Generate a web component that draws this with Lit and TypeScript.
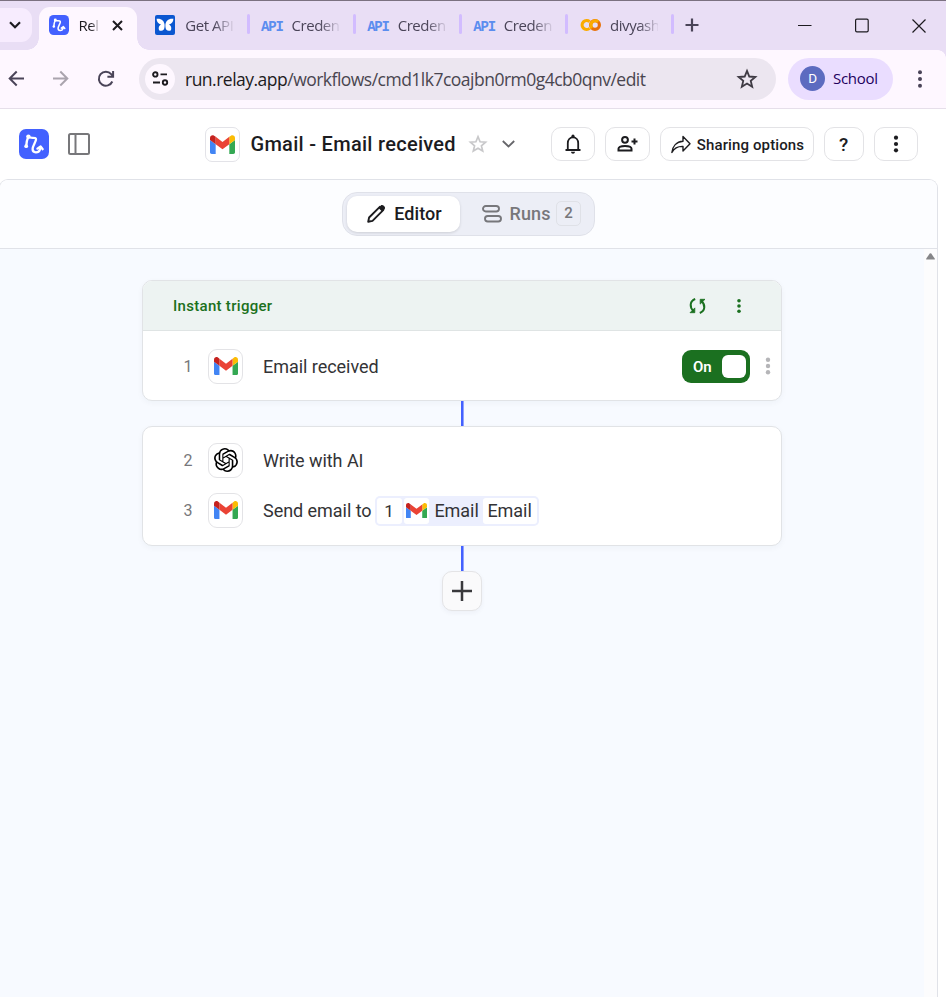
import { LitElement, html, css, svg } from "lit";
import { customElement } from "lit/decorators.js";

const shared = css`
  * { box-sizing: border-box; }
  svg { display: block; flex: none; }
`;

const gmail = (w: number) => html`<svg width=${w} height=${w * 0.76} viewBox="0 0 88 66">
  <path fill="#4285f4" d="M6 66h14V32L0 17v43c0 3.3 2.7 6 6 6z"/>
  <path fill="#34a853" d="M68 66h14c3.3 0 6-2.7 6-6V17L68 32z"/>
  <path fill="#fbbc04" d="M68 6v26l20-15V9c0-7.400-8.500-11.600-14.400-7.200z"/>
  <path fill="#ea4335" d="M20 32V6l24 18L68 6v26L44 50z"/>
  <path fill="#c5221f" d="M0 9v8l20 15V6l-5.600-4.200C8.500-2.600 0 1.600 0 9z"/>
</svg>`;

const relay = (s: number) => html`<svg width=${s} height=${s} viewBox="0 0 30 30">
  <rect width="30" height="30" rx="7" fill="#4361ff"/>
  <g fill="none" stroke="#fff" stroke-width="2.300" stroke-linecap="round" stroke-linejoin="round">
    <path d="M7.200 17.200C7.400 13 8.300 10 9.300 7.800C11.500 10 17.500 7.300 17 10.600C16.500 13.500 13.600 17 13.600 20C13.600 24.400 19.600 24.200 20.800 20.800C21.200 19.800 21.400 19 21.500 18M18.400 19.600L21.600 17.400L23.700 20.200"/>
  </g>
  <circle cx="9.400" cy="7.600" r="2.200" fill="#fff"/><circle cx="7.200" cy="17.200" r="1.900" fill="#fff"/>
</svg>`;

const dots = (r: number, gap: number, color: string) => html`<svg width="6" height="24" viewBox="0 0 6 24" fill=${color}>
  ${[-1, 0, 1].map((i) => svg`<circle cx="3" cy=${12 + i * gap} r=${r}/>`)}
</svg>`;

const star = (s: number, color: string, w: number) => html`<svg width=${s} height=${s} viewBox="0 0 24 24" fill="none" stroke=${color} stroke-width=${w}>
  <path d="M12 3.200l2.500 6.100 6.600.5-5 4.300 1.550 6.400L12 17l-5.650 3.500 1.550-6.400-5-4.300 6.600-.5z"/>
</svg>`;

const butterfly = html`<svg width="20" height="20" viewBox="0 0 20 20">
  <rect width="20" height="20" rx="2" fill="#0b57d0"/>
  <path fill="#fff" d="M9.600 9.700C9.200 6 6.500 3.200 1.600 3.800C1.700 7 3.300 8.800 6 9.600C4 10.500 3.200 12.500 4 15.200C7 17 9.600 15 9.600 11.200zM10.400 9.700C10.800 6 13.500 3.200 18.400 3.800C18.300 7 16.700 8.800 14 9.600C16 10.500 16.800 12.500 16 15.200C13 17 10.400 15 10.400 11.200z"/>
</svg>`;

const colab = html`<svg width="22" height="14" viewBox="0 0 22 14" fill="none" stroke-width="3.200">
  <path stroke="#fbab00" d="M9.600 3.600A4.500 4.500 0 1 0 9.600 10.400"/>
  <circle cx="15" cy="7" r="4.400" stroke="#e8710a"/>
  <path stroke="#fbab00" d="M11.900 10.100A4.400 4.400 0 0 1 18.100 3.900"/>
</svg>`;

const api = html`<span class="api">API</span>`;

@customElement("browser-tabs")
export class BrowserTabs extends LitElement {
  static styles = [shared, css`
    :host { display: flex; height: 50px; background: #e9def5; border-top: 1px solid #7b7180;
      font-family: "Open Sans", "Noto Sans", sans-serif; font-size: 15px; color: #4a4458; }
    .search { width: 32px; height: 34px; margin-top: 7px; background: #f7ecfe; border-radius: 0 11px 11px 0;
      display: flex; align-items: center; padding-left: 9px; }
    .active { position: relative; width: 98px; margin: 6px 5px 0 7px; background: #fef7ff; border-radius: 11px 11px 0 0;
      display: flex; align-items: center; padding: 0 0 7px 10px; color: #1d1b20; }
    .active::before, .active::after { content: ""; position: absolute; bottom: 0; width: 12px; height: 12px; }
    .active::before { left: -12px; background: radial-gradient(circle at 0 0, transparent 11.5px, #fef7ff 12px); }
    .active::after { right: -12px; background: radial-gradient(circle at 100% 0, transparent 11.500px, #fef7ff 12px); }
    .name { overflow: hidden; white-space: nowrap; margin-left: 9.500px; width: 48px; letter-spacing: -.45px; line-height: 24px;
      -webkit-mask-image: linear-gradient(90deg, #000 60%, transparent 105%); mask-image: linear-gradient(90deg, #000 60%, transparent 105%); }
    .active .name { width: 20px; }
    .close { margin-left: 13.500px; }
    .tab { width: 106.200px; height: 48px; display: flex; align-items: center; padding-left: 12.800px; position: relative; }
    .tab::after { content: ""; position: absolute; right: -1.500px; top: 13px; width: 3px; height: 20px; border-radius: 2px; background: #d2bcff; }
    .api { width: 21px; font: 700 14px "Liberation Mono", monospace; letter-spacing: -1.200px; color: #5b8def; }
    .icon { width: 21px; flex: none; }
    .new { margin: 17px 0 0 12px; }
    .window { margin: 17px 20px 0 auto; display: flex; gap: 43px; }
  `];
  render() {
    const tabs = [
      [butterfly, "Get API key"], [api, "Credentials"], [api, "Credentials"], [api, "Credentials"], [colab, "divyashree"],
    ];
    return html`
      <div class="search"><svg width="12" height="8" viewBox="0 0 12 8" fill="none" stroke="#1d1b20" stroke-width="2.200"><path d="M1 1.200l5 5 5-5"/></svg></div>
      <div class="active">${relay(20)}<span class="name">Relay</span>
        <svg class="close" width="11" height="11" viewBox="0 0 11 11" stroke="#1d1b20" stroke-width="2"><path d="M1 1l9 9M10 1l-9 9"/></svg></div>
      ${tabs.map(([icon, name]) => html`<div class="tab"><span class="icon">${icon}</span><span class="name">${name}</span></div>`)}
      <svg class="new" width="14" height="14" viewBox="0 0 14 14" stroke="#4a4458" stroke-width="2.200"><path d="M7 .5v13M.5 7h13"/></svg>
      <div class="window">
        <svg width="14" height="15" viewBox="0 0 14 15" stroke="#1d1b20"><path d="M0 7.500h13.500"/></svg>
        <svg width="14" height="15" viewBox="0 0 14 15" fill="none" stroke="#1d1b20" stroke-width="1.200"><rect x=".6" y="1.200" width="12.600" height="12.600" rx="1.300"/></svg>
        <svg width="14" height="15" viewBox="0 0 14 15" stroke="#1d1b20" stroke-width="1.200"><path d="M.5 1.500l13 13M13.500 1.500l-13 13"/></svg>
      </div>`;
  }
}

@customElement("browser-toolbar")
export class BrowserToolbar extends LitElement {
  static styles = [shared, css`
    :host { display: flex; align-items: center; height: 59px; background: #fef7ff; border-bottom: 1px solid #e6dfea;
      padding: 0 0 1px 8px; font-family: "Open Sans", "Noto Sans", sans-serif; color: #4a4458; position: relative; }
    .corner { position: absolute; right: 0; top: 0; width: 8px; height: 8px; background: radial-gradient(circle at 0 100%, transparent 7.500px, #e9def5 8px); }
    .nav { display: flex; gap: 27px; align-items: center; }
    .omni { margin-left: 23px; width: 637px; height: 42px; border-radius: 21px; background: #ece6f0; display: flex; align-items: center; padding: 0 18px 0 6px; }
    .site { width: 30px; height: 30px; border-radius: 50%; background: #fef7ff; display: flex; align-items: center; justify-content: center; margin-right: 10px; }
    .url { font-size: 17.500px; letter-spacing: -.51px; color: #49454f; white-space: nowrap; flex: 1; }
    .host { color: #1d1b20; }
    .profile { margin-left: 12px; width: 105px; height: 42px; border-radius: 21px; background: #eaddff; display: flex; align-items: center; padding: 0 0 1px 12px;
      font-size: 15px; letter-spacing: -.3px; color: #21005d; }
    .avatar { width: 25px; height: 25px; border-radius: 50%; background: #5c6bc0; color: #fff; font: 13.500px Roboto, sans-serif; text-align: center; line-height: 25px; margin-right: 8px; }
    .more { margin-left: 24px; }
  `];
  render() {
    return html`
      <div class="corner"></div>
      <div class="nav">
        <svg width="17" height="17" viewBox="0 0 17 17" fill="none" stroke="#4a4458" stroke-width="2"><path d="M16 8.500H2M8.700 1.500l-7 7 7 7"/></svg>
        <svg width="17" height="17" viewBox="0 0 17 17" fill="none" stroke="#aaa4ae" stroke-width="2"><path d="M1 8.500h14M8.300 1.500l7 7-7 7"/></svg>
        <svg width="20" height="18" viewBox="0 0 20 18" fill="none" stroke="#4a4458" stroke-width="2"><path d="M16.300 11.500A7 7 0 1 1 15.200 4.200L17 6.200M17.100 1v5.800h-5.700"/></svg>
      </div>
      <div class="omni">
        <div class="site"><svg width="17" height="15" viewBox="0 0 17 15" fill="none" stroke="#1d1b20" stroke-width="1.900"><circle cx="3.300" cy="3.400" r="2.200"/><path d="M8.500 3.400H15M1 11.500h7"/><circle cx="13" cy="11.500" r="2.200"/></svg></div>
        <span class="url"><span class="host">run.relay.app</span>/workflows/cmd1lk7coajbn0rm0g4cb0qnv/edit</span>
        ${star(22, "#3f3b44", 2)}
      </div>
      <div class="profile"><span class="avatar">D</span>School</div>
      <span class="more">${dots(2, 6.7, "#4a4458")}</span>`;
  }
}

@customElement("workflow-header")
export class WorkflowHeader extends LitElement {
  static styles = [shared, css`
    :host { display: flex; align-items: center; height: 70px; padding-left: 19px; background: #fff; color: #1c1c1f; font-family: Roboto, sans-serif; }
    .side { margin-left: 19px; }
    .app { margin-left: 115px; width: 35px; height: 35px; border: 1px solid #e3e3e8; border-radius: 7px; display: flex; align-items: center; justify-content: center; }
    h1 { width: 206px; margin: 0 0 0 10.500px; font-size: 20px; font-weight: 480; letter-spacing: .29px; white-space: nowrap; }
    .fav { margin-left: 11.500px; }
    .chev { margin: 0 36px 0 13.500px; }
    .btn { height: 34px; border: 1px solid #e3e3e6; border-radius: 10px; display: flex; align-items: center; justify-content: center; margin-right: 10px; width: 44px;
      font-size: 15px; font-weight: 500; white-space: nowrap; }
    .share { width: 154px; gap: 6px; letter-spacing: .12px; padding: 1px 0 0 2px; }
    .help { width: 40px; font-size: 19px; }
    .wide { width: 45px; }
  `];
  render() {
    return html`
      ${relay(30)}
      <svg class="side" width="22" height="22" viewBox="0 0 22 22" fill="none" stroke="#77777a" stroke-width="2"><rect x="1" y="1" width="20" height="20" rx="1.500"/><path d="M7.500 1v20"/></svg>
      <div class="app">${gmail(25)}</div>
      <h1>Gmail - Email received</h1>
      <span class="fav">${star(20, "#c8c8ca", 2)}</span>
      <svg class="chev" width="13" height="8" viewBox="0 0 13 8" fill="none" stroke="#66666a" stroke-width="1.800"><path d="M.8 1l5.700 5.500L12.200 1"/></svg>
      <div class="btn"><svg width="18" height="20" viewBox="0 0 18 20"><path d="M1.500 16h15M3.800 15.500V9.200c0-3.400 2-5.800 5.200-5.800s5.200 2.400 5.200 5.800v6.300" fill="none" stroke="#1c1c1f" stroke-width="1.800"/><circle cx="9" cy="2.200" r="1.600" fill="#1c1c1f"/><path d="M7 17.800h4c0 2.600-4 2.600-4 0z" fill="#1c1c1f"/></svg></div>
      <div class="btn wide"><svg width="22" height="18" viewBox="0 0 22 18" fill="none" stroke="#1c1c1f" stroke-width="2"><circle cx="9" cy="4.800" r="2.900"/><path d="M2.500 15.600v-1.800c0-3.800 13-3.800 13 0v1.800zM18.500 3.500v6M15.500 6.500h6"/></svg></div>
      <div class="btn share"><svg width="20" height="19" viewBox="0 0 20 19" fill="none" stroke="#1c1c1f" stroke-width="1.400" stroke-linejoin="round"><path d="M12 1.500l7 7.200-7 7.300v-4.600C6.500 11.200 3 13.500.9 17.500C1.500 11.200 5.500 6.600 12 6.200z"/></svg>Sharing options</div>
      <div class="btn help">?</div>
      <div class="btn">${dots(2.1, 6.3, "#1c1c1f")}</div>`;
  }
}

@customElement("step-row")
export class StepRow extends LitElement {
  static properties = { num: {}, icon: {} };
  declare num: string;
  declare icon: string;
  static styles = [shared, css`
    :host { display: flex; align-items: center; height: 50px; padding-left: 40px; font-size: 18px; font-weight: 370; letter-spacing: -.04px; color: #333336; }
    .num { width: 10px; font-size: 16px; color: #77777b; text-align: center; }
    .box { width: 35px; height: 35px; margin: 0 20px 0 15px; border: 1px solid #e3e3e6; border-radius: 9px; display: flex; align-items: center; justify-content: center; }
    .content { flex: 1; display: flex; align-items: center; white-space: nowrap; }
  `];
  render() {
    const ai = html`<svg width="24" height="24" viewBox="0 0 24 24"><path fill="#000" d="M22.280 9.820a5.980 5.980 0 0 0-.52-4.910 6.050 6.050 0 0 0-6.510-2.900A6.070 6.070 0 0 0 4.980 4.180a5.980 5.980 0 0 0-4 2.900 6.050 6.050 0 0 0 .74 7.100 5.980 5.980 0 0 0 .51 4.910 6.050 6.050 0 0 0 6.520 2.900A5.980 5.980 0 0 0 13.260 24a6.060 6.060 0 0 0 5.770-4.210 5.990 5.990 0 0 0 4-2.900 6.060 6.060 0 0 0-.75-7.070zM13.260 22.430a4.480 4.480 0 0 1-2.880-1.040l.14-.08 4.780-2.760a.79.79 0 0 0 .39-.68v-6.740l2.020 1.170a.07.07 0 0 1 .04.05v5.580a4.500 4.500 0 0 1-4.490 4.500zM3.600 18.300a4.470 4.470 0 0 1-.54-3.010l.14.08 4.780 2.760a.77.77 0 0 0 .78 0l5.840-3.370v2.330a.08.08 0 0 1-.03.06L9.740 19.950a4.500 4.500 0 0 1-6.140-1.650zM2.340 7.900a4.490 4.490 0 0 1 2.370-1.980v5.680a.77.77 0 0 0 .38.680l5.820 3.350-2.020 1.170a.08.08 0 0 1-.07 0L3.990 14A4.500 4.500 0 0 1 2.340 7.870zM18.940 11.750l-5.830-3.390 2.010-1.160a.08.08 0 0 1 .07 0l4.830 2.790a4.490 4.490 0 0 1-.67 8.100v-5.680a.79.79 0 0 0-.41-.66zM20.950 8.730l-.14-.09-4.770-2.780a.78.78 0 0 0-.79 0L9.410 9.230V6.900a.07.07 0 0 1 .03-.06l4.830-2.790a4.500 4.500 0 0 1 6.680 4.660zM8.310 12.860l-2.020-1.160a.08.08 0 0 1-.04-.06V6.070a4.500 4.500 0 0 1 7.380-3.450l-.14.08-4.780 2.760a.79.79 0 0 0-.39.680zM9.400 10.500l2.600-1.500 2.610 1.500v3l-2.600 1.500-2.610-1.500z"/></svg>`;
    return html`<span class="num">${this.num}</span><span class="box">${this.icon === "ai" ? ai : gmail(24)}</span><div class="content"><slot></slot></div>`;
  }
}

@customElement("app-root")
export class AppRoot extends LitElement {
  static styles = [shared, css`
    :host { display: flex; flex-direction: column; height: 997px; width: 946px; overflow: hidden; background: #fff; font-family: Roboto, sans-serif; color: #1c1c1f; }
    .panel { flex: 1; display: flex; flex-direction: column; width: 939px; margin-left: -1px; border: 1px solid #e0e2e8; border-bottom: 0; border-radius: 9px 9px 0 0; overflow: hidden; }
    .modes { height: 69px; background: #fcfdff; border-bottom: 1px solid #e0e2e8; padding: 12px 0 0 342px; }
    .switch { width: 253px; height: 44px; border: 1px solid #dfe1e9; border-radius: 15px; background: #eceef6; display: flex; align-items: center; padding: 0 0 1px 4px; font-size: 18px; font-weight: 480; letter-spacing: .1px; }
    .mode { width: 113px; height: 36px; border-radius: 10px; background: #fff; box-shadow: 0 1px 3px #0002; display: flex; align-items: center; justify-content: center; gap: 8px; padding-left: 2px; }
    .runs { display: flex; align-items: center; color: #77777b; margin-left: 22px; gap: 7.500px; }
    .count { width: 25px; height: 25px; margin-left: -2px; border: 1px solid #dfe1e7; border-radius: 5px; font-size: 15px; line-height: 23px; text-align: center; }
    .work { flex: 1; display: flex; background: #f7faff; }
    .canvas { width: 924px; display: flex; flex-direction: column; align-items: center; padding-top: 31px; }
    .scroll { flex: 1; background: #fcfcfd; padding: 4px 0 0 2px; }
    .card { width: 640px; background: #fff; border: 1px solid #e1e3e6; border-radius: 10px; box-shadow: 0 2px 6px #2030500a; overflow: hidden; }
    .trigger { height: 121px; }
    .steps { height: 120px; padding-top: 8px; }
    .head { height: 50px; background: #edf3f2; border-bottom: 1px solid #dfe4e4; display: flex; align-items: center; padding: 0 39px 0 30px; font-size: 15px; font-weight: 500; letter-spacing: .3px; color: #1b7020; }
    .head-icons { margin-left: auto; display: flex; align-items: center; gap: 30px; }
    .first { margin-top: 10px; }
    .line { width: 3px; height: 25px; background: linear-gradient(90deg, #4361ff 2px, #91a3ff 2px); }
    .toggle { margin-left: auto; width: 68px; height: 33px; margin-top: 1px; border-radius: 9px; background: #1b7020; color: #fff; font-size: 15px; font-weight: 600; display: flex; align-items: center; padding-left: 11px; }
    .knob { width: 24px; height: 23px; border-radius: 6px; background: #fff; margin: 0 4px 0 auto; }
    .row-more { margin: 0 10px 0 15px; }
    .chip { margin: 1px 0 0 3px; width: 164px; height: 30px; padding: 2px; border-radius: 5px; background: #eceffe; display: flex; }
    .part { background: #fff; height: 26px; line-height: 26px; border-radius: 3px; text-align: center; display: flex; align-items: center; justify-content: center; width: 25px; margin-right: 2px; font-size: 17px; }
    .type { width: 52px; line-height: 26px; text-align: center; font-size: 18px; }
    .field { width: 54px; font-size: 18px; margin: 0; }
    .add { width: 40px; height: 40px; border: 1px solid #e4e4e6; border-radius: 10px; background: #fafafb; box-shadow: 0 2px 5px #2030500c; display: flex; align-items: center; justify-content: center; }
  `];
  render() {
    return html`
      <browser-tabs></browser-tabs>
      <browser-toolbar></browser-toolbar>
      <workflow-header></workflow-header>
      <div class="panel">
        <div class="modes"><div class="switch">
          <div class="mode"><svg width="19" height="19" viewBox="0 0 19 19"><path d="M1.200 17.800l.9-4.300L12.800 2.800l3.400 3.400L5.500 16.900z" fill="none" stroke="#1c1c1f" stroke-width="1.900" stroke-linejoin="round"/><path d="M11.500 4l2.300-2.600c1.800-1.800 5.600 2 3.800 3.800L15 7.500z" fill="#1c1c1f"/></svg>Editor</div>
          <div class="runs"><svg width="20" height="18" viewBox="0 0 20 18" fill="none" stroke="#77777b" stroke-width="1.900"><rect x="1" y="1" width="16" height="5.500" rx="2.750"/><rect x="3" y="11" width="16" height="5.500" rx="2.750"/></svg>Runs<span class="count">2</span></div>
        </div></div>
        <div class="work">
          <div class="canvas">
            <div class="card trigger">
              <div class="head">Instant trigger<div class="head-icons">
                <svg width="17" height="16" viewBox="0 0 17 16" fill="none" stroke="#1b7020" stroke-width="2"><path d="M6.200 1C.8 3 .2 9.200 4.600 13M10.800 15C16.200 13 16.800 6.800 12.400 3"/><path d="M1 14.700h4.800V9.900zM16 1.300h-4.800v4.800z" fill="#1b7020" stroke-width=".8"/></svg>
                ${dots(1.8, 5.2, "#1b7020")}
              </div></div>
              <step-row class="first" num="1" icon="gmail">Email received
                <div class="toggle">On<span class="knob"></span></div><span class="row-more">${dots(2.2, 6.2, "#b5b5b8")}</span>
              </step-row>
            </div>
            <div class="line"></div>
            <div class="card steps">
              <step-row num="2" icon="ai">Write with AI</step-row>
              <step-row num="3" icon="gmail">Send email to
                <div class="chip"><span class="part">1</span><span class="part">${gmail(21)}</span><span class="type">Email</span><span class="part field">Email</span></div>
              </step-row>
            </div>
            <div class="line"></div>
            <div class="add"><svg width="20" height="20" viewBox="0 0 20 20" stroke="#39393c" stroke-width="2.500"><path d="M10 0v20M0 10h20"/></svg></div>
          </div>
          <div class="scroll"><svg width="9" height="7" viewBox="0 0 9 7" fill="#858588"><path d="M3.700.6q.8-.9 1.600 0l3.400 5q.5 1-.6 1H.9q-1.100 0-.6-1z"/></svg></div>
        </div>
      </div>`;
  }
}
